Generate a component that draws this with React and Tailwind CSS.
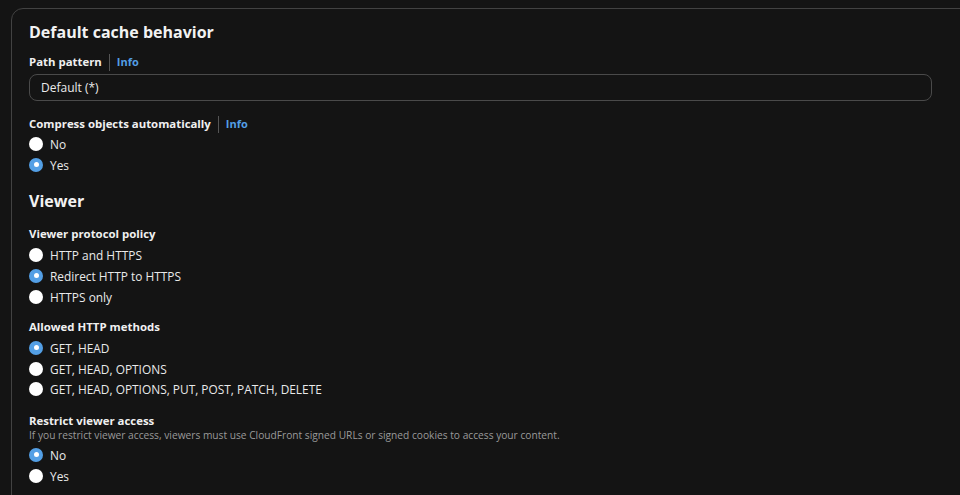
import React from "react";

function Radio({ checked, label }) {
  return (
    <div className="flex h-[20.75px] items-center">
      {checked ? (
        <span className="flex h-[14px] w-[14px] items-center justify-center rounded-full bg-[#539fe5]">
          <span className="h-[5px] w-[5px] rounded-full bg-white" />
        </span>
      ) : (
        <span className="h-[14px] w-[14px] rounded-full bg-white" />
      )}
      <span className="ml-[7px] text-[11.9px] leading-4 text-[#eaeaea]">{label}</span>
    </div>
  );
}

function Label({ children, info }) {
  return (
    <div className="flex h-4 items-center text-[11.4px] font-bold leading-4 text-[#f0f0f0]">
      <span>{children}</span>
      {info && (
        <>
          <span className="ml-[7px] h-[17px] w-px bg-[#555]" />
          <span className="ml-[7px] text-[11px] font-bold text-[#539fe5]">Info</span>
        </>
      )}
    </div>
  );
}

export default function App() {
  return (
    <div
      className="h-[495px] w-[960px] overflow-hidden bg-[#141414] pl-[11px] pt-2"
      style={{ fontFamily: '"Open Sans", "Noto Sans", sans-serif' }}
    >
      <div className="h-[520px] w-[1000px] rounded-xl border border-[#424242] bg-[#141414] pl-[17px] pt-3">
        <h2 className="text-[16px] font-bold leading-[22px] text-[#f2f2f2]">Default cache behavior</h2>

        <div className="mt-[11px]">
          <Label info>Path pattern</Label>
          <div className="mt-1 flex h-[27px] w-[903px] items-center rounded-lg border border-[#4a4a4a] px-[11px] text-[12px] text-[#eaeaea]">
            Default (*)
          </div>
        </div>

        <div className="mt-[15px]">
          <Label info>Compress objects automatically</Label>
          <div className="mt-[1.6px]">
            <Radio label="No" />
            <Radio checked label="Yes" />
          </div>
        </div>

        <h3 className="mt-[15px] text-[16px] font-bold leading-[22px] text-[#f2f2f2]">Viewer</h3>

        <div className="mt-[14px]">
          <Label>Viewer protocol policy</Label>
          <div className="mt-[2.6px]">
            <Radio label="HTTP and HTTPS" />
            <Radio checked label="Redirect HTTP to HTTPS" />
            <Radio label="HTTPS only" />
          </div>
        </div>

        <div className="mt-[12px]">
          <Label>Allowed HTTP methods</Label>
          <div className="mt-[2.6px]">
            <Radio checked label="GET, HEAD" />
            <Radio label="GET, HEAD, OPTIONS" />
            <Radio label="GET, HEAD, OPTIONS, PUT, POST, PATCH, DELETE" />
          </div>
        </div>

        <div className="mt-[13px]">
          <Label>Restrict viewer access</Label>
          <p className="text-[10.2px] leading-[13px] text-[#9a9a9a]">
            If you restrict viewer access, viewers must use CloudFront signed URLs or signed cookies to access your content.
          </p>
          <div className="mt-[2.6px]">
            <Radio checked label="No" />
            <Radio label="Yes" />
          </div>
        </div>
      </div>
    </div>
  );
}
